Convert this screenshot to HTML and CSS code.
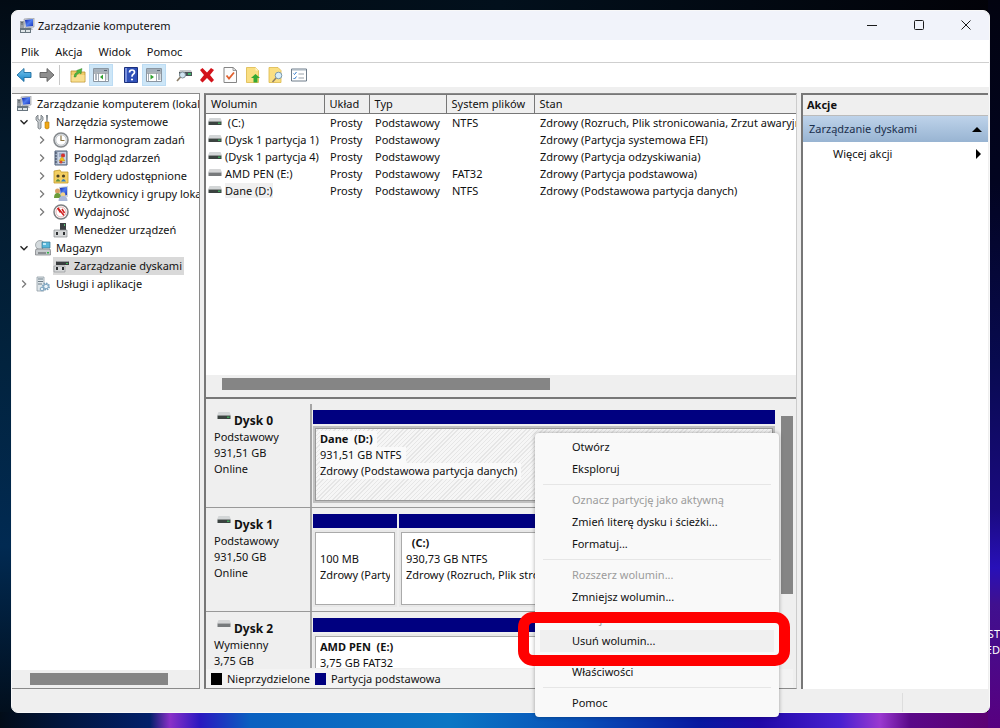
FILE: index.html
```html
<!DOCTYPE html>
<html lang="pl">
<head>
    <meta charset="UTF-8">
    <meta name="viewport" content="width=device-width, initial-scale=1.0">
    <title>Zarządzanie komputerem</title>
    <link rel="stylesheet" href="styles.css">
</head>
<body>
    <svg class="defs" width="0" height="0" aria-hidden="true">
        <defs>
            <linearGradient id="blue" x1="0" y1="0" x2="1" y2="1">
                <stop offset="0" stop-color="#0a1fa8"/>
                <stop offset="0.5" stop-color="#4f7df0"/>
                <stop offset="1" stop-color="#1530b8"/>
            </linearGradient>
            <linearGradient id="arrowBlue" x1="0" y1="0" x2="0" y2="1">
                <stop offset="0" stop-color="#7cc8f0"/>
                <stop offset="1" stop-color="#1583c6"/>
            </linearGradient>
        </defs>
        <symbol id="i-computer" viewBox="0 0 16 16">
            <path d="M5 1l10-1v9l-9 1z" fill="#d5d8dc" stroke="#8a8f96" stroke-width=".6"/>
            <path d="M6 2l8-1v7l-7 .800z" fill="url(#blue)"/>
            <path d="M1 3h4v7H1z" fill="#9aa0a6"/>
            <path d="M2 4.500h2M2 6h2" stroke="#4b5157" stroke-width=".7"/>
            <path d="M8 10h5l1 2H8z" fill="#b9bec3"/>
            <path d="M1 10h11v5H1z" fill="#68757f"/>
            <path d="M2 12h4v2H2zM7 12h4v2H7z" fill="#dfe5e8"/>
        </symbol>
        <symbol id="i-tools" viewBox="0 0 16 16">
            <path d="M3 1v4l1.500 1 1.500-1V1l2 2v3L6 8v6q-1.500 2-3 0V8L1 6V3z" fill="#c3c8cc" stroke="#6d7378" stroke-width=".8"/>
            <path d="M11 1h2l-.4 7h-1.200z" fill="#7d848a"/>
            <path d="M10 8h4v6q-2 2-4 0z" fill="#f0a818" stroke="#b87a08" stroke-width=".6"/>
        </symbol>
        <symbol id="i-clock" viewBox="0 0 16 16">
            <circle cx="8" cy="8" r="7" fill="#e4e8ea" stroke="#85898d" stroke-width="1.600"/>
            <circle cx="8" cy="8" r="5.200" fill="#fff" stroke="#b9bdc1" stroke-width=".8"/>
            <path d="M8 3.500V8.500h3.500" fill="none" stroke="#8a7440" stroke-width="1.200"/>
        </symbol>
        <symbol id="i-events" viewBox="0 0 16 16">
            <path d="M2 1h12v14H2z" fill="#a9b7cb" stroke="#51607a"/>
            <path d="M5 2h8v12H5z" fill="#c9d3e4"/>
            <path d="M2 3h2M2 6h2M2 9h2M2 12h2" stroke="#333d52"/>
            <path d="M6 4h6M6 6h6M6 12.500h6" stroke="#5a6f99" stroke-width=".8"/>
            <circle cx="10" cy="5.500" r="2" fill="#d62f2f"/>
            <path d="M9 6.500l3 4.500H6z" fill="#f2c21c" stroke="#a88304" stroke-width=".4"/>
            <circle cx="8" cy="12" r="1.500" fill="#d6472f"/>
        </symbol>
        <symbol id="i-shared" viewBox="0 0 16 16">
            <path d="M1 3l6-1 1 2h7v11H1z" fill="#f3cf62" stroke="#c29a2a" stroke-width=".8"/>
            <circle cx="5" cy="8" r="1.600" fill="#4b4126"/>
            <circle cx="10.500" cy="8" r="1.600" fill="#4b4126"/>
            <path d="M2.500 13.500q2.500-5 5 0z" fill="#5f8f3e"/>
            <path d="M8 13.500q2.500-5 5 0z" fill="#2f7ec2"/>
        </symbol>
        <symbol id="i-users" viewBox="0 0 16 16">
            <path d="M6 1l9-1v11l-8 1z" fill="#cfd3d8"/>
            <path d="M7 2l7-1v8l-6 1z" fill="url(#blue)"/>
            <circle cx="4.500" cy="5" r="2.500" fill="#d9a066"/>
            <path d="M1 12q0-5 3.500-5T8 12z" fill="#6b9c3a"/>
            <circle cx="10" cy="8.500" r="2.300" fill="#f0d08a"/>
            <path d="M5.500 15q0-5 4.500-5t4.500 5z" fill="#a9b6d8"/>
        </symbol>
        <symbol id="i-perf" viewBox="0 0 16 16">
            <circle cx="8" cy="8" r="7" fill="#fff" stroke="#7d7f82" stroke-width="1.500"/>
            <circle cx="8" cy="8" r="5" fill="none" stroke="#d9a0a0" stroke-width=".8"/>
            <path d="M4.500 4l3 4.500M5 4l6 7.500M9 5l2.500 4" fill="none" stroke="#d01f1f" stroke-width="1.500"/>
        </symbol>
        <symbol id="i-device" viewBox="0 0 16 16">
            <path d="M7 1h6v8H7z" fill="#3c4043"/>
            <path d="M11 2h1v2h-1z" fill="#59c274"/>
            <path d="M1 8h13v7H1z" fill="#d6d8d9" stroke="#85898c" stroke-width=".7"/>
            <path d="M3 10h2v3H3zM10 10h2v3h-2z" fill="#2c2f31"/>
        </symbol>
        <symbol id="i-storage" viewBox="0 0 16 16">
            <circle cx="5" cy="5" r="4.500" fill="#d4dadd" stroke="#8d9498" stroke-width=".7"/>
            <path d="M7 2h8v6H7z" fill="#58b7da" stroke="#39778f" stroke-width=".7"/>
            <path d="M8 3h3v2H8z" fill="#bfe9f6"/>
            <path d="M1 9h14l.5 2v4H.5v-4z" fill="#c7cbce" stroke="#75797c" stroke-width=".7"/>
            <path d="M3 13h8" stroke="#4f5356"/>
            <path d="M12 12h2v1.500h-2z" fill="#35b54a"/>
        </symbol>
        <symbol id="i-diskmgmt" viewBox="0 0 16 16">
            <path d="M3 4l1-1h11l1 1v3H3z" fill="#393c3e"/>
            <path d="M4 3h11l.5 1H3.500z" fill="#9a9da0"/>
            <path d="M13 5h2v1h-2z" fill="#3dbb57"/>
            <path d="M1 8h11v6H1z" fill="#d6d8d9" stroke="#8c8f92" stroke-width=".6"/>
            <path d="M3 9h2v3H3zM9 9h2v3H9z" fill="#2c2f31"/>
        </symbol>
        <symbol id="i-services" viewBox="0 0 16 16">
            <path d="M2 1h7v14H2z" fill="#dfe6ea" stroke="#8f9ca5" stroke-width=".8"/>
            <path d="M3 3h5M3 5.500h5M3 8h4" stroke="#6f7e88"/>
            <circle cx="11" cy="10.500" r="3" fill="none" stroke="#7ba3bf" stroke-width="2" stroke-dasharray="1.500 .8"/>
            <circle cx="11" cy="10.500" r="2.300" fill="#e9f2f8" stroke="#7ba3bf"/>
            <circle cx="7" cy="13" r="1.800" fill="#e9f2f8" stroke="#7ba3bf"/>
        </symbol>
        <symbol id="i-drive" viewBox="0 0 14 8">
            <path d="M1.500 0h11L14 3.500H0z" fill="#d3d6d7"/>
            <path d="M.5 3.500h13V7H.5z" fill="#3b4340"/>
            <path d="M10 4.500h2.500V6H10z" fill="#3fa35a"/>
        </symbol>
        <symbol id="i-removable" viewBox="0 0 14 8">
            <path d="M1.500 0h11L14 3.500H0z" fill="#d5d6d7"/>
            <path d="M.5 3.500h13V7H.5z" fill="#777a7c"/>
        </symbol>
        <symbol id="i-back" viewBox="0 0 16 16">
            <path d="M8 1.500v4h7v5H8v4L1 8z" fill="url(#arrowBlue)" stroke="#1b6c9e" stroke-width=".9"/>
        </symbol>
        <symbol id="i-forward" viewBox="0 0 16 16">
            <path d="M8 1.500v4H1v5h7v4L15 8z" fill="#8e8e8e" stroke="#5f5f5f" stroke-width=".9"/>
        </symbol>
        <symbol id="i-up" viewBox="0 0 16 16">
            <path d="M1 4h5l1 1h8v10H1z" fill="#f1cd6b" stroke="#b98f2e" stroke-width=".8"/>
            <path d="M1.500 8h13v6.500h-13z" fill="#f8de8f"/>
            <path d="M4 10q0-4 3.500-5L6.500 3.500 12 1.500 11 7 9.500 6Q6 7 6 10z" fill="#4fb83d" stroke="#2b7a29" stroke-width=".4"/>
        </symbol>
        <symbol id="i-panel-left" viewBox="0 0 16 14">
            <path d="M.5.5h15v13H.5z" fill="#fff" stroke="#8b96a1"/>
            <path d="M1 1h14v3H1z" fill="#a5b0ba"/>
            <path d="M11 2.500h3M1 5h14" stroke="#5b6771"/>
            <path d="M5.500 5v8.500M12.500 5v8.500" stroke="#8b96a1" stroke-width=".8"/>
            <path d="M2 7h2M2 9h2M2 11h2M13.500 7h1M13.500 9h1M13.500 11h1" stroke="#607083"/>
            <path d="M10 6.500v5L7 9z" fill="#30a030"/>
        </symbol>
        <symbol id="i-panel-right" viewBox="0 0 16 14">
            <path d="M.5.5h15v13H.5z" fill="#fff" stroke="#8b96a1"/>
            <path d="M1 1h14v3H1z" fill="#a5b0ba"/>
            <path d="M11 2.500h3M1 5h14" stroke="#5b6771"/>
            <path d="M2.500 5v8.500M10.500 5v8.500" stroke="#8b96a1" stroke-width=".8"/>
            <path d="M12 7h2.500M12 9h2.500M12 11h2.500" stroke="#607083"/>
            <path d="M4.500 6.500v5L8 9z" fill="#30a030"/>
        </symbol>
        <symbol id="i-help" viewBox="0 0 14 16">
            <path d="M.5.5h13v15H.5z" fill="#2f50b8" stroke="#1a2f7c"/>
            <path d="M1 1h2v14H1z" fill="#7c93de"/>
            <path d="M5.500 5.500q0-2.500 2.500-2.500t2.500 2.300q0 1.300-1.300 2Q8 8 8 9.800" fill="none" stroke="#fff" stroke-width="1.700"/>
            <circle cx="8" cy="12.500" r="1.100" fill="#fff"/>
        </symbol>
        <symbol id="i-rescan" viewBox="0 0 16 16">
            <path d="M4 3h11l1 2H3z" fill="#c6cacc"/>
            <path d="M3 5h13v4H3z" fill="#4a5356"/>
            <path d="M12 6h3v2h-3z" fill="#3eb16a"/>
            <circle cx="6.500" cy="8" r="3" fill="#cfe4f0" stroke="#7f8f99"/>
            <path d="M4.500 10L1 14" stroke="#8a7d68" stroke-width="1.600"/>
        </symbol>
        <symbol id="i-delete" viewBox="0 0 16 16">
            <path d="M3.500 1L8 5.500 12 1l3 2-4 5 4 5-2.500 2.500L8 11l-4.500 4.500L1 13l4-5-4-5z" fill="#d3131b"/>
        </symbol>
        <symbol id="i-check" viewBox="0 0 14 16">
            <path d="M1 .5h9l3.500 3v12H1z" fill="#fcfcfc" stroke="#858585"/>
            <path d="M10 .5v3h3.500" fill="none" stroke="#858585" stroke-width=".8"/>
            <path d="M3.500 8.500l2.500 3 5-6" fill="none" stroke="#e0602e" stroke-width="1.800"/>
        </symbol>
        <symbol id="i-folder-up" viewBox="0 0 14 16">
            <path d="M.5.5h9l3 3v12H.5z" fill="#fadf82" stroke="#dcb74a" stroke-width=".8"/>
            <path d="M9.500.5v3h3" fill="#fff3c4"/>
            <path d="M9.500 7L14 11h-2.500v4.500h-4V11H5z" fill="#35a933"/>
        </symbol>
        <symbol id="i-folder-find" viewBox="0 0 15 16">
            <path d="M.5.5h9l3 3v12H.5z" fill="#fadf82" stroke="#dcb74a" stroke-width=".8"/>
            <circle cx="10" cy="8.500" r="3.300" fill="#d7edf8" stroke="#7a9aae"/>
            <path d="M7.500 11L4 15" stroke="#8e7f64" stroke-width="1.500"/>
        </symbol>
        <symbol id="i-list" viewBox="0 0 16 13">
            <path d="M.5.5h15v12H.5z" fill="#fff" stroke="#6e7c8a"/>
            <path d="M1 1.500h14" stroke="#a8b5c1"/>
            <path d="M2.500 5l1 1 2-2.500M2.500 9.500l1 1 2-2.500" fill="none" stroke="#3079c9"/>
            <path d="M7.500 5.500H13M7.500 9.500H13" stroke="#9aa3ab"/>
        </symbol>
        <symbol id="i-open" viewBox="0 0 10 10">
            <path d="M1.500 3.200L5 6.700l3.500-3.500" fill="none" stroke="#222" stroke-width="1.400"/>
        </symbol>
        <symbol id="i-closed" viewBox="0 0 10 10">
            <path d="M3.200 1.500L6.700 5 3.200 8.500" fill="none" stroke="#777" stroke-width="1.200"/>
        </symbol>
    </svg>

    <div class="desktop-icon">ASUST<br>SPEED</div>

    <div class="window">
        <header class="titlebar">
            <svg class="icon"><use href="#i-computer"/></svg>
            <h1>Zarządzanie komputerem</h1>
            <div class="window-buttons">
                <button type="button" aria-label="Minimalizuj"><svg viewBox="0 0 10 10"><path d="M0 5.500h10"/></svg></button>
                <button type="button" aria-label="Maksymalizuj"><svg viewBox="0 0 10 10"><rect x=".5" y=".5" width="9" height="9" rx="1"/></svg></button>
                <button type="button" aria-label="Zamknij"><svg viewBox="0 0 10 10"><path d="M.5.5l9 9M9.500.5l-9 9"/></svg></button>
            </div>
        </header>

        <nav class="menubar">
            <button type="button">Plik</button>
            <button type="button">Akcja</button>
            <button type="button">Widok</button>
            <button type="button">Pomoc</button>
        </nav>

        <div class="toolbar">
            <button type="button" aria-label="Wstecz"><svg class="icon"><use href="#i-back"/></svg></button>
            <button type="button" aria-label="Dalej"><svg class="icon"><use href="#i-forward"/></svg></button>
            <span class="separator"></span>
            <button type="button" aria-label="W górę"><svg class="icon"><use href="#i-up"/></svg></button>
            <button type="button" class="pressed" aria-label="Drzewo konsoli"><svg class="icon"><use href="#i-panel-left"/></svg></button>
            <span class="space"></span>
            <button type="button" aria-label="Pomoc"><svg class="icon"><use href="#i-help"/></svg></button>
            <button type="button" class="pressed" aria-label="Okienko akcji"><svg class="icon"><use href="#i-panel-right"/></svg></button>
            <span class="space"></span>
            <button type="button" aria-label="Skanuj dyski"><svg class="icon"><use href="#i-rescan"/></svg></button>
            <button type="button" aria-label="Usuń"><svg class="icon"><use href="#i-delete"/></svg></button>
            <button type="button" aria-label="Właściwości"><svg class="icon"><use href="#i-check"/></svg></button>
            <button type="button" aria-label="Otwórz"><svg class="icon"><use href="#i-folder-up"/></svg></button>
            <button type="button" aria-label="Eksploruj"><svg class="icon"><use href="#i-folder-find"/></svg></button>
            <button type="button" aria-label="Ustawienia"><svg class="icon"><use href="#i-list"/></svg></button>
        </div>

        <main class="panes">
            <aside class="tree-pane">
                <ul class="tree">
                    <li><div class="node root"><svg class="icon"><use href="#i-computer"/></svg><span>Zarządzanie komputerem (lokal</span></div>
                        <ul>
                            <li><div class="node"><svg class="chevron"><use href="#i-open"/></svg><svg class="icon"><use href="#i-tools"/></svg><span>Narzędzia systemowe</span></div>
                                <ul>
                                    <li><div class="node"><svg class="chevron"><use href="#i-closed"/></svg><svg class="icon"><use href="#i-clock"/></svg><span>Harmonogram zadań</span></div></li>
                                    <li><div class="node"><svg class="chevron"><use href="#i-closed"/></svg><svg class="icon"><use href="#i-events"/></svg><span>Podgląd zdarzeń</span></div></li>
                                    <li><div class="node"><svg class="chevron"><use href="#i-closed"/></svg><svg class="icon"><use href="#i-shared"/></svg><span>Foldery udostępnione</span></div></li>
                                    <li><div class="node"><svg class="chevron"><use href="#i-closed"/></svg><svg class="icon"><use href="#i-users"/></svg><span>Użytkownicy i grupy loka</span></div></li>
                                    <li><div class="node"><svg class="chevron"><use href="#i-closed"/></svg><svg class="icon"><use href="#i-perf"/></svg><span>Wydajność</span></div></li>
                                    <li><div class="node"><i class="chevron"></i><svg class="icon"><use href="#i-device"/></svg><span>Menedżer urządzeń</span></div></li>
                                </ul>
                            </li>
                            <li><div class="node"><svg class="chevron"><use href="#i-open"/></svg><svg class="icon"><use href="#i-storage"/></svg><span>Magazyn</span></div>
                                <ul>
                                    <li><div class="node"><i class="chevron"></i><div class="selected"><svg class="icon"><use href="#i-diskmgmt"/></svg><span>Zarządzanie dyskami</span></div></div></li>
                                </ul>
                            </li>
                            <li><div class="node"><svg class="chevron"><use href="#i-closed"/></svg><svg class="icon"><use href="#i-services"/></svg><span>Usługi i aplikacje</span></div></li>
                        </ul>
                    </li>
                </ul>
                <div class="scroll-x tree-scroll"><div class="thumb"></div></div>
            </aside>

            <section class="center-pane">
                <div class="volumes">
                    <table>
                        <colgroup>
                            <col class="col-volume"><col class="col-layout"><col class="col-type"><col class="col-fs"><col>
                        </colgroup>
                        <thead>
                            <tr><th>Wolumin</th><th>Układ</th><th>Typ</th><th>System plików</th><th>Stan</th></tr>
                        </thead>
                        <tbody>
                            <tr><td><svg class="drive"><use href="#i-drive"/></svg><span>&nbsp;(C:)</span></td><td>Prosty</td><td>Podstawowy</td><td>NTFS</td><td>Zdrowy (Rozruch, Plik stronicowania, Zrzut awaryjny)</td></tr>
                            <tr><td><svg class="drive"><use href="#i-drive"/></svg><span>(Dysk 1 partycja 1)</span></td><td>Prosty</td><td>Podstawowy</td><td></td><td>Zdrowy (Partycja systemowa EFI)</td></tr>
                            <tr><td><svg class="drive"><use href="#i-drive"/></svg><span>(Dysk 1 partycja 4)</span></td><td>Prosty</td><td>Podstawowy</td><td></td><td>Zdrowy (Partycja odzyskiwania)</td></tr>
                            <tr><td><svg class="drive"><use href="#i-removable"/></svg><span>AMD PEN (E:)</span></td><td>Prosty</td><td>Podstawowy</td><td>FAT32</td><td>Zdrowy (Partycja podstawowa)</td></tr>
                            <tr><td><svg class="drive"><use href="#i-drive"/></svg><span class="current">Dane (D:)</span></td><td>Prosty</td><td>Podstawowy</td><td>NTFS</td><td>Zdrowy (Podstawowa partycja danych)</td></tr>
                        </tbody>
                    </table>
                    <div class="scroll-x table-scroll"><div class="thumb"></div></div>
                </div>

                <div class="disks">
                    <div class="disk-list">
                        <div class="disk">
                            <div class="disk-info">
                                <h2><svg class="drive"><use href="#i-drive"/></svg>Dysk 0</h2>
                                <p>Podstawowy</p>
                                <p>931,51 GB</p>
                                <p>Online</p>
                            </div>
                            <div class="partitions">
                                <div class="partition hatched">
                                    <div class="details">
                                        <p><b>Dane&nbsp; (D:)</b></p>
                                        <p><span>931,51 GB NTFS</span></p>
                                        <p><span>Zdrowy (Podstawowa partycja danych)</span></p>
                                    </div>
                                </div>
                            </div>
                        </div>
                        <div class="disk">
                            <div class="disk-info">
                                <h2><svg class="drive"><use href="#i-drive"/></svg>Dysk 1</h2>
                                <p>Podstawowy</p>
                                <p>931,50 GB</p>
                                <p>Online</p>
                            </div>
                            <div class="partitions">
                                <div class="partition small">
                                    <div class="details">
                                        <p>&nbsp;</p>
                                        <p>100 MB</p>
                                        <p>Zdrowy (Partycja systemowa EFI)</p>
                                    </div>
                                </div>
                                <div class="partition">
                                    <div class="details">
                                        <p><b>&nbsp; (C:)</b></p>
                                        <p>930,73 GB NTFS</p>
                                        <p>Zdrowy (Rozruch, Plik stronicowania, Zrzut awaryjny)</p>
                                    </div>
                                </div>
                            </div>
                        </div>
                        <div class="disk">
                            <div class="disk-info">
                                <h2><svg class="drive"><use href="#i-removable"/></svg>Dysk 2</h2>
                                <p>Wymienny</p>
                                <p>3,75 GB</p>
                            </div>
                            <div class="partitions">
                                <div class="partition">
                                    <div class="details">
                                        <p><b>AMD PEN&nbsp; (E:)</b></p>
                                        <p>3,75 GB FAT32</p>
                                    </div>
                                </div>
                            </div>
                        </div>
                    </div>
                    <div class="scroll-y"><div class="thumb"></div></div>
                    <div class="legend">
                        <span class="swatch black"></span><span>Nieprzydzielone</span>
                        <span class="swatch navy"></span><span>Partycja podstawowa</span>
                    </div>
                </div>

                <div class="context-menu" role="menu">
                    <button type="button">Otwórz</button>
                    <button type="button">Eksploruj</button>
                    <hr>
                    <button type="button" disabled>Oznacz partycję jako aktywną</button>
                    <button type="button">Zmień literę dysku i ścieżki...</button>
                    <button type="button">Formatuj...</button>
                    <hr>
                    <button type="button" disabled>Rozszerz wolumin...</button>
                    <button type="button">Zmniejsz wolumin...</button>
                    <button type="button" disabled>Dodaj dublowanie...</button>
                    <button type="button" class="hover">Usuń wolumin...</button>
                    <hr>
                    <button type="button">Właściwości</button>
                    <hr>
                    <button type="button">Pomoc</button>
                    <div class="marker"></div>
                </div>
            </section>

            <aside class="actions-pane">
                <h2>Akcje</h2>
                <button type="button" class="actions-group"><span>Zarządzanie dyskami</span><svg viewBox="0 0 10 5"><path d="M5 0l5 5H0z"/></svg></button>
                <button type="button" class="actions-item"><span>Więcej akcji</span><svg viewBox="0 0 10 10"><path d="M4 0l5 5-5 5z"/></svg></button>
            </aside>
        </main>

        <footer class="statusbar"><span></span></footer>
    </div>
</body>
</html>
```

FILE: styles.css
```css
* {
    margin: 0;
    padding: 0;
    box-sizing: border-box;
}

body {
    display: flex;
    min-height: 100vh;
    padding: 10px 10px 15px 11px;
    font-family: 'Noto Sans', 'Open Sans', sans-serif;
    font-size: 11px;
    line-height: 16px;
    color: #111;
    background:
        linear-gradient(180deg, #020310 0%, #020420 25%, #080a50 50%, #1a0a80 70%, #2810b8 78%, #40108f 83%, #580080 100%) right top / 12px 100% no-repeat,
        linear-gradient(90deg, #020c18 0%, #01153c 6%, #02206a 15%, #8a30c8 17%, #2a18c0 20%, #0a60c0 25%, #0a76c4 45%, #0850b8 58%, #0818a0 70%, #2008a8 76%, #4820d0 84%, #9a38d0 88%, #5a0888 91%, #5c0070 100%) left bottom / 100% 16px no-repeat,
        linear-gradient(180deg, #020b14 0%, #03182a 20%, #02233e 50%, #012a52 75%, #020c18 100%) left top / 20px 100% no-repeat,
        linear-gradient(90deg, #020b14 0%, #02101c 50%, #020208 100%);
}

button {
    font: inherit;
    color: inherit;
    background: none;
    border: none;
}

.defs {
    position: absolute;
}

.icon {
    width: 16px;
    height: 16px;
    flex: none;
}

.drive {
    width: 14px;
    height: 8px;
    flex: none;
}

/* label of a desktop shortcut that sticks out from behind the window */
.desktop-icon {
    position: absolute;
    right: 0;
    top: 626px;
    width: 34px;
    overflow: hidden;
    color: #fff;
    text-align: right;
}

.window {
    position: relative;
    flex: 1;
    min-width: 0;
    display: flex;
    flex-direction: column;
    background: #efefef;
    border: 1px solid #f8f8f8;
    border-radius: 7px;
}

.titlebar {
    display: flex;
    align-items: center;
    gap: 3px;
    height: 29px;
    padding-left: 7px;
    background: #f1f3fa;
    border-radius: 7px 7px 0 0;
}

.titlebar h1 {
    flex: 1;
    font-size: 11px;
    font-weight: 400;
}

.window-buttons {
    display: flex;
}

.window-buttons button {
    width: 47px;
    height: 28px;
}

.window-buttons svg {
    width: 10px;
    height: 10px;
    fill: none;
    stroke: #1a1a1a;
}

.menubar {
    display: flex;
    gap: 16px;
    height: 23px;
    padding: 2px 9px 0;
    background: #fff;
    border-bottom: 1px solid #cfcfcf;
}

.toolbar {
    display: flex;
    align-items: center;
    height: 24px;
    background: #fff;
}

.toolbar button {
    display: flex;
    align-items: center;
    justify-content: center;
    width: 23px;
    height: 22px;
}

.toolbar .pressed {
    width: 24px;
    background: #cde6f7;
    outline: 1px solid #bcdcf4;
    outline-offset: -1px;
}

.toolbar .separator {
    width: 1px;
    height: 20px;
    margin: 0 6px 0 1px;
    background: #c8c8c8;
}

.toolbar .space {
    width: 6px;
}

.panes {
    flex: 1;
    display: grid;
    grid-template-columns: 188px minmax(0, 1fr) 187px;
    gap: 4px;
    padding: 6px 1px 0 0;
}

.scroll-x {
    height: 18px;
    padding: 3px 0;
    background: #efefef;
}

.thumb {
    background: #858585;
}

.scroll-x .thumb {
    height: 12px;
}

/* left pane */
.tree-pane {
    display: flex;
    flex-direction: column;
    min-width: 0;
    background: #fff;
    border: 1px solid #8a8a8a;
    border-left: none;
}

.tree {
    flex: 1;
    padding: 1px 0 0 4px;
    overflow: hidden;
}

.tree ul {
    list-style: none;
}

.tree ul ul {
    padding-left: 18px;
}

.tree li {
    list-style: none;
}

.node {
    display: flex;
    align-items: center;
    height: 18px;
    white-space: nowrap;
}

.node span {
    padding-left: 5px;
}

.chevron {
    width: 10px;
    height: 10px;
    margin: 0 6px 0 3px;
    flex: none;
}

.selected {
    display: flex;
    align-items: center;
    height: 18px;
    padding-right: 2px;
    background: #d9d9d9;
}

.tree-scroll .thumb {
    width: 138px;
    margin-left: 18px;
}

/* middle pane */
.center-pane {
    position: relative;
    display: flex;
    flex-direction: column;
    min-width: 0;
    border: 1px solid #8a8a8a;
    border-left: 2px solid #777;
    border-right-color: #ccc;
}

.volumes {
    display: flex;
    flex-direction: column;
    height: 305px;
    background: #fff;
    border-top: 1px solid #777;
    border-bottom: 2px solid #777;
}

.volumes table {
    width: 100%;
    table-layout: fixed;
    border-collapse: collapse;
}

.col-volume {
    width: 118px;
}

.col-layout {
    width: 45px;
}

.col-type {
    width: 77px;
}

.col-fs {
    width: 88px;
}

.volumes th {
    height: 18px;
    padding: 1px 5px 0;
    background: #efefef;
    border-right: 1px solid #777;
    border-bottom: 1px solid #777;
    font-weight: 400;
    text-align: left;
    white-space: nowrap;
}

.volumes th:last-child {
    border-right: none;
}

.volumes td {
    height: 17px;
    padding-left: 6px;
    white-space: nowrap;
    overflow: hidden;
}

.volumes td:first-child {
    padding-left: 2px;
}

.volumes .drive {
    margin: 0 3px 1px 0;
}

.current {
    background: #f0f0f0;
}

.volumes tbody::before {
    content: '';
    display: block;
    height: 1px;
}

.table-scroll {
    height: 22px;
    margin-top: auto;
}

.table-scroll .thumb {
    width: 328px;
    margin-left: 16px;
}

.disks {
    flex: 1;
    display: grid;
    grid-template-columns: minmax(0, 1fr) 12px;
    grid-template-rows: minmax(0, 1fr) 19px;
    column-gap: 6px;
    padding: 5px 3px 0 0;
    background: #efefef;
}

.disk-list {
    height: 264px;
    overflow: hidden;
}

.disk {
    display: grid;
    grid-template-columns: 106px minmax(0, 1fr);
    height: 104px;
    border-bottom: 1px solid #999;
}

.disk-info {
    padding: 8px 0 0 8px;
    border-right: 2px solid #a5a5a5;
}

.disk-info h2 {
    display: flex;
    gap: 3px;
    padding-left: 3px;
    font-size: 12px;
    line-height: 17px;
}

.partitions {
    display: flex;
    gap: 2px;
    padding: 6px 0 4px 1px;
}

.partition {
    flex: 1;
    min-width: 0;
    display: flex;
    flex-direction: column;
    gap: 2px;
}

.partition::before {
    content: '';
    height: 14px;
    background: #000080;
}

.partition.small {
    flex: none;
    width: 84px;
}

.details {
    flex: 1;
    padding: 3px 4px 0;
    overflow: hidden;
    white-space: nowrap;
    background: #fff;
    border: 3px solid #e8e8e8;
    border-top-width: 2px;
    outline: 1px solid #aaa;
    outline-offset: -3px;
}

.details p {
    overflow: hidden;
}

.details b {
    font-size: 11px;
}

.hatched .details {
    background: repeating-linear-gradient(135deg, #f6f6f6 0 2px, #e6e6e6 2px 3px);
    border-color: #c0c0c0;
    outline-color: #999;
}

.hatched span,
.hatched b {
    display: inline-block;
    padding-right: 4px;
    background: #fafafa;
}

.scroll-y {
    padding-top: 12px;
}

.scroll-y .thumb {
    height: 178px;
}

.legend {
    grid-column: 1 / -1;
    display: flex;
    align-items: center;
    gap: 5px;
    padding-left: 5px;
    background: #f3f3f3;
}

.swatch {
    width: 11px;
    height: 12px;
}

.swatch.black {
    background: #000;
}

.swatch.navy {
    background: #000080;
}

/* menu opened over the partition */
.context-menu {
    position: absolute;
    left: 329px;
    top: 339px;
    width: 244px;
    padding: 3px 5px;
    background: #f9f9f9;
    border-radius: 4px;
    box-shadow: 0 0 4px rgba(0, 0, 0, 0.35);
}

.context-menu button {
    display: block;
    width: 100%;
    height: 22px;
    padding-left: 32px;
    text-align: left;
}

.context-menu button:disabled {
    color: #9c9c9c;
}

.context-menu .hover {
    background: #f0f0f0;
}

.context-menu hr {
    margin: 4px 3px;
    border: none;
    border-top: 1px solid #e6e6e6;
}

.marker {
    position: absolute;
    left: -17px;
    top: 179px;
    width: 272px;
    height: 54px;
    border: 11px solid #f00;
    border-radius: 15px;
}

/* right pane */
.actions-pane {
    display: flex;
    flex-direction: column;
    background: #fff;
    border-top: 2px solid #777;
    border-left: 2px solid #777;
}

.actions-pane h2 {
    height: 21px;
    padding: 2px 4px;
    background: #efefef;
    border-bottom: 1px solid #bbb;
    font-size: 11px;
}

.actions-pane button {
    display: flex;
    align-items: center;
    justify-content: space-between;
    height: 26px;
    padding: 0 6px;
}

.actions-pane svg {
    width: 10px;
}

.actions-group {
    color: #1a2f4c;
    background: linear-gradient(180deg, #bed3ea, #98b4d2);
}

.actions-pane .actions-item {
    height: 23px;
    padding-left: 30px;
}

.statusbar {
    display: flex;
    justify-content: flex-end;
    height: 23px;
    border-radius: 0 0 7px 7px;
}

.statusbar span {
    width: 87px;
    margin-top: 4px;
    border-left: 1px solid #ddd;
}
```
